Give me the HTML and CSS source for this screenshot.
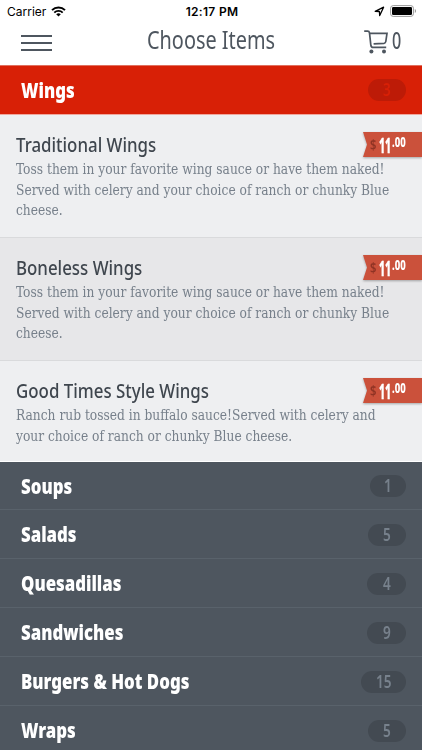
FILE: index.html
```html
<!DOCTYPE html>
<html lang="en">
  <head>
    <meta charset="UTF-8" />
    <meta name="viewport" content="width=device-width, initial-scale=1.0"/>
    <title>Choose Items</title>
    <link rel="stylesheet" href="styles.css">
  </head>
  <body>
    <header>
      <div class="status-bar">
        <div class="carrier">
          <span>Carrier</span>
          <svg width="15" height="11" viewBox="0 0 15 11">
            <path d="M1 4.1a9.3 9.3 0 0 1 13 0" fill="none" stroke="#000" stroke-width="2"/>
            <path d="M3.3 6.6a6 6 0 0 1 8.4 0" fill="none" stroke="#000" stroke-width="1.9"/>
            <path d="M7.5 10.6L5.2 8.3a3.3 3.3 0 0 1 4.6 0z"/>
          </svg>
        </div>
        <div class="clock">12:17 PM</div>
        <div class="indicators">
          <svg width="11" height="11" viewBox="0 0 11 11">
            <path d="M1.2 5.3L9.6 1.2L5.7 9.6L5.4 5.5z" fill="none" stroke="#000" stroke-width="1.3" stroke-linejoin="round"/>
          </svg>
          <svg width="27" height="12" viewBox="0 0 27 12">
            <rect x=".6" y=".6" width="22.8" height="10.8" rx="2.6" fill="none" stroke="#999" stroke-width="1"/>
            <rect x="2" y="2" width="20" height="8" rx="1.2"/>
            <path d="M24.8 4v4a2.2 2.2 0 0 0 0-4z" fill="#999"/>
          </svg>
        </div>
      </div>
      <div class="nav-bar">
        <button class="menu" aria-label="Menu"><i></i><i></i><i></i></button>
        <h1><span class="narrow">Choose Items</span></h1>
        <div class="cart">
          <svg width="25" height="24" viewBox="0 0 25 24" fill="none" stroke="#4e565f" stroke-width="1.7">
            <path d="M0.2 1.2H3.6C4.7 1.2 5.3 1.7 5.5 2.8L6.8 14.8C7 16.6 7.8 17.4 9.2 17.4H22.2"/>
            <path d="M5.8 3.4H23L21.8 11.5C21.6 12.8 21.1 13.2 20 13.3L9.6 13.9"/>
            <circle cx="7.4" cy="21.4" r="2" fill="#4e565f" stroke="none"/>
            <circle cx="20" cy="21.4" r="2" fill="#4e565f" stroke="none"/>
          </svg>
          <span class="narrow">0</span>
        </div>
      </div>
    </header>

    <main>
      <div class="category open"><h2 class="narrow">Wings</h2><span class="count w38"><b class="narrow">3</b></span></div>

      <section class="items">
        <article>
          <h3 class="narrow">Traditional Wings</h3>
          <p>Toss them in your favorite wing sauce or have them naked!<br>Served with celery and your choice of ranch or chunky Blue<br>cheese.</p>
          <div class="price"><div class="ribbon"><i class="narrow">$</i><b class="narrow">11</b><sup class="narrow">.00</sup></div></div>
        </article>
        <article class="alt">
          <h3 class="narrow">Boneless Wings</h3>
          <p>Toss them in your favorite wing sauce or have them naked!<br>Served with celery and your choice of ranch or chunky Blue<br>cheese.</p>
          <div class="price"><div class="ribbon"><i class="narrow">$</i><b class="narrow">11</b><sup class="narrow">.00</sup></div></div>
        </article>
        <article class="last">
          <h3 class="narrow">Good Times Style Wings</h3>
          <p>Ranch rub tossed in buffalo sauce!Served with celery and<br>your choice of ranch or chunky Blue cheese.</p>
          <div class="price"><div class="ribbon"><i class="narrow">$</i><b class="narrow">11</b><sup class="narrow">.00</sup></div></div>
        </article>
      </section>

      <div class="category"><h2 class="narrow">Soups</h2><span class="count w36"><b class="narrow">1</b></span></div>
      <div class="category"><h2 class="narrow">Salads</h2><span class="count w38"><b class="narrow">5</b></span></div>
      <div class="category"><h2 class="narrow">Quesadillas</h2><span class="count w39"><b class="narrow">4</b></span></div>
      <div class="category"><h2 class="narrow">Sandwiches</h2><span class="count w39"><b class="narrow">9</b></span></div>
      <div class="category"><h2 class="narrow">Burgers &amp; Hot Dogs</h2><span class="count w45"><b class="narrow">15</b></span></div>
      <div class="category"><h2 class="narrow">Wraps</h2><span class="count w38"><b class="narrow">5</b></span></div>
    </main>
  </body>
</html>
```
FILE: styles.css
```css
* {
  box-sizing: border-box;
}

body {
  margin: 0;
  height: 750px;
  overflow: hidden;
  background-color: #4e565f;
  font-family: "Noto Sans", "Open Sans", sans-serif;
}

h1, h2, h3, p {
  margin: 0;
}

/* condensed lettering */
.narrow {
  display: inline-block;
  white-space: nowrap;
  transform: scaleX(0.8);
  transform-origin: left center;
}

header {
  height: 65px;
  background-color: #fff;
}

.status-bar {
  display: grid;
  grid-template-columns: 1fr auto 1fr;
  align-items: center;
  height: 22px;
  padding: 0 5px 0 7px;
  font-family: Inter, sans-serif;
  font-size: 12px;
}

.carrier {
  display: flex;
  align-items: center;
  gap: 5px;
}

.clock {
  font-weight: 600;
  letter-spacing: 0.3px;
}

.indicators {
  display: flex;
  align-items: center;
  justify-content: flex-end;
  gap: 5px;
}

.nav-bar {
  display: grid;
  grid-template-columns: 147px 1fr 58px;
  height: 43px;
  color: #4e565f;
}

.menu {
  display: flex;
  flex-direction: column;
  gap: 5px;
  width: 52px;
  padding: 13px 0 0 21px;
  border: 0;
  background: none;
}

.menu i {
  width: 31px;
  height: 2px;
  background-color: #4e565f;
}

h1 {
  font-size: 26px;
  line-height: 35px;
  font-weight: 400;
}

h1 .narrow {
  transform: scaleX(0.765);
}

.cart {
  display: flex;
  gap: 3px;
  padding-top: 8px;
  font-size: 23px;
  line-height: 21px;
  font-weight: 500;
}

.cart .narrow {
  transform: scaleX(0.7);
}

.category {
  display: flex;
  align-items: center;
  justify-content: space-between;
  height: 49px;
  padding: 1px 16px 0 21px;
  border-bottom: 1px solid #59626b;
  background-color: #4e565f;
  color: #fff;
}

.items + .category {
  height: 48px;
}

.category.open {
  height: 50px;
  padding-top: 0;
  border-top: 1px solid #e0705f;
  border-bottom: 1px solid #f0a79d;
  background-color: #d82006;
}

h2 {
  margin-top: -1px;
  font-size: 21px;
  line-height: 28px;
  font-weight: 900;
}

.count {
  display: flex;
  align-items: center;
  justify-content: center;
  height: 22px;
  border-radius: 11px;
  background-color: #434a52;
  color: #77818c;
  font-size: 17px;
  line-height: 22px;
}

.count .narrow {
  font-weight: 600;
  transform-origin: center;
}

.open .count {
  background-color: #bd1b07;
  color: #d82006;
}

.w36 { width: 36px; }
.w38 { width: 38px; }
.w39 { width: 39px; }
.w45 { width: 45px; }

article {
  position: relative;
  height: 123px;
  padding: 15px 0 0 16px;
  border-bottom: 1px solid #d9dadc;
  background-color: #eeeff1;
}

article.alt {
  background-color: #e7e7e9;
}

article.last {
  height: 101px;
  border-bottom: 1px solid #fff;
}

h3 {
  font-size: 20.5px;
  line-height: 28px;
  font-weight: 500;
  color: #3f464e;
}

article h3.narrow {
  display: block;
  width: max-content;
  margin-bottom: 1px;
  transform: scaleX(0.823);
}

article p {
  width: max-content;
  font-family: "DejaVu Serif Condensed", "DejaVu Serif", serif;
  font-stretch: condensed;
  font-size: 14.5px;
  line-height: 20.7px;
  color: #77808b;
  white-space: nowrap;
  transform: scaleX(0.94);
  transform-origin: left center;
}

/* price tag hangs off the right edge */
.price {
  position: absolute;
  top: 17px;
  right: 0;
  filter: drop-shadow(0 1px 1px rgba(0, 0, 0, 0.3));
}

.ribbon {
  display: flex;
  width: 59px;
  height: 25px;
  padding-left: 7px;
  background-color: #cb513b;
  color: #fff;
  clip-path: polygon(0 0, 100% 0, 100% 100%, 0 100%, 4px 50%);
}

.ribbon i {
  width: 9px;
  font-size: 14px;
  line-height: 25px;
  font-style: normal;
  font-weight: 600;
  color: #8f3324;
}

.ribbon b {
  width: 13px;
  font-size: 22px;
  line-height: 24px;
  font-weight: 800;
  transform: scaleX(0.48);
  -webkit-text-stroke: 0.4px #fff;
}

.ribbon sup {
  font-size: 14px;
  line-height: 20px;
  font-weight: 800;
  transform: scaleX(0.68);
}
```
